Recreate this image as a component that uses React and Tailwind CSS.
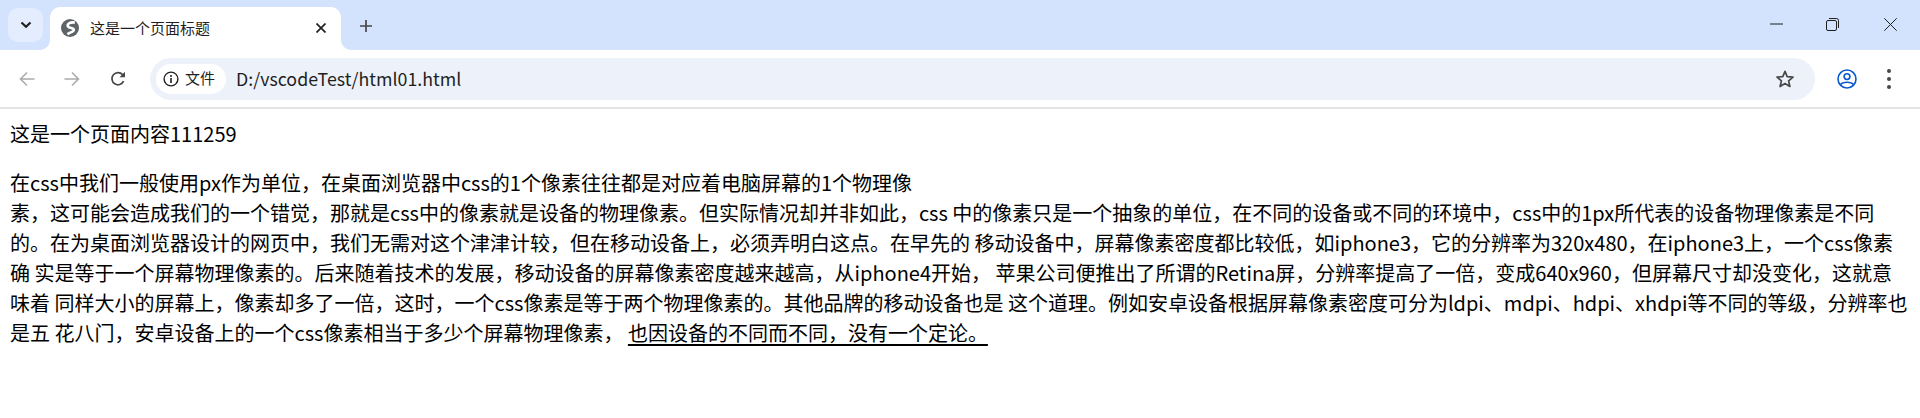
function ChevronIcon() {
  return (
    <svg width="16" height="16" viewBox="0 0 16 16" fill="none" stroke="#1f1f1f" strokeWidth="2.2">
      <path d="M3.5 5.5 L8 9.7 L12.5 5.5" />
    </svg>
  );
}

function GlobeIcon() {
  return (
    <svg width="18" height="18" viewBox="0 0 18 18" fill="none">
      <circle cx="9" cy="9" r="9" fill="#5f6368" />
      <path d="M13.8 3.6 C9.5 2.8 6 4.6 6.8 7.2 C7.6 9.8 12.6 8.4 12.8 10.8 C13 12.8 9 13.2 6.4 15.2" stroke="#fff" strokeWidth="2.6" />
    </svg>
  );
}

function ArrowIcon({ flip, color }) {
  return (
    <svg width="16" height="16" viewBox="0 0 16 16" fill="none" stroke={color} strokeWidth="1.6" className={flip ? "-scale-x-100" : ""}>
      <path d="M15.5 8 H1.5 M8 1.5 L1.5 8 L8 14.5" />
    </svg>
  );
}

function ReloadIcon() {
  return (
    <svg width="16" height="16" viewBox="0 0 16 16" fill="none" stroke="#474747" strokeWidth="1.7">
      <path d="M13.6 10.2 A6.1 6.1 0 1 1 12.6 3.6 L14.5 5.5" />
      <path d="M15 0.8 V6.3 H9.5 Z" fill="#474747" stroke="none" />
    </svg>
  );
}

function InfoIcon() {
  return (
    <svg width="16" height="16" viewBox="0 0 16 16" fill="none">
      <circle cx="8" cy="8" r="6.9" stroke="#1f1f1f" strokeWidth="1.4" />
      <path d="M8 7 V12" stroke="#1f1f1f" strokeWidth="1.6" />
      <circle cx="8" cy="4.9" r="1" fill="#1f1f1f" />
    </svg>
  );
}

function StarIcon() {
  return (
    <svg width="20" height="20" viewBox="0 0 20 20" fill="none" stroke="#474747" strokeWidth="1.7" strokeLinejoin="round">
      <path d="M10 2.4 L12.2 7.6 L18 8.1 L13.6 11.9 L14.9 17.5 L10 14.6 L5.1 17.5 L6.4 11.9 L2 8.1 L7.8 7.6 Z" />
    </svg>
  );
}

function ProfileIcon() {
  return (
    <svg width="20" height="20" viewBox="0 0 20 20" fill="none" stroke="#0b57d0" strokeWidth="1.6">
      <circle cx="10" cy="10" r="9" />
      <circle cx="10" cy="7.6" r="2.9" />
      <path d="M3.6 15.6 C5.5 12.4 14.5 12.4 16.4 15.6" />
    </svg>
  );
}

function TabFoot({ right }) {
  return (
    <svg width="10" height="10" viewBox="0 0 10 10" className={right ? "absolute -right-[10px] bottom-0" : "absolute -left-[10px] bottom-0"}>
      <path d={right ? "M0 0 A10 10 0 0 0 10 10 H0 Z" : "M10 0 A10 10 0 0 1 0 10 H10 Z"} fill="#fff" />
    </svg>
  );
}

function App() {
  return (
    <div className="h-[418px] w-[1920px] overflow-hidden bg-white font-['Noto_Sans_CJK_SC','Noto_Sans',sans-serif]">
      <div className="flex h-[50px] bg-[#d3e3fd]">
        <div className="ml-2 mt-2 flex h-[34px] w-[35px] items-center justify-center rounded-[10px] bg-[#e4edfd]">
          <ChevronIcon />
        </div>
        <div className="relative ml-[7px] mt-[7px] flex h-[43px] w-[291px] items-center rounded-t-[10px] bg-white pb-[1px]">
          <TabFoot />
          <TabFoot right />
          <div className="ml-[11px]">
            <GlobeIcon />
          </div>
          <span className="ml-[11px] text-[15px] text-[#1f1f1f]">这是一个页面标题</span>
          <svg width="10" height="10" viewBox="0 0 10 10" stroke="#1f1f1f" strokeWidth="1.7" className="ml-auto mr-[15px]">
            <path d="M0.5 0.5 L9.5 9.5 M9.5 0.5 L0.5 9.5" />
          </svg>
        </div>
        <svg width="14" height="14" viewBox="0 0 14 14" stroke="#474747" strokeWidth="1.7" className="ml-[18px] mt-[19px]">
          <path d="M7 1 V13 M1 7 H13" />
        </svg>
        <div className="ml-auto flex h-[48px] items-center">
          <svg width="13" height="2" viewBox="0 0 13 2" stroke="#1f1f1f" strokeWidth="1" className="mr-[43px]">
            <path d="M0 1 H13" />
          </svg>
          <svg width="13" height="13" viewBox="0 0 13 13" fill="none" stroke="#1f1f1f" strokeWidth="1" className="mr-[45px]">
            <rect x="0.5" y="2.5" width="10" height="10" rx="1.5" />
            <path d="M3 0.5 H10.5 A2 2 0 0 1 12.5 2.5 V10" />
          </svg>
          <svg width="13" height="13" viewBox="0 0 13 13" stroke="#1f1f1f" strokeWidth="1" className="mr-[23px]">
            <path d="M0.3 0.3 L12.7 12.7 M12.7 0.3 L0.3 12.7" />
          </svg>
        </div>
      </div>

      <div className="flex h-[59px] items-center rounded-t-[10px] border-b-2 border-[#e3e3e3] bg-white">
        <div className="ml-[19px]">
          <ArrowIcon color="#a9abad" />
        </div>
        <div className="ml-[29px]">
          <ArrowIcon flip color="#a9abad" />
        </div>
        <div className="ml-[30px]">
          <ReloadIcon />
        </div>
        <div className="ml-[24px] flex h-[42px] w-[1665px] items-center rounded-full bg-[#edf2fa] pl-[6px]">
          <div className="flex h-[30px] w-[70px] items-center rounded-full bg-white pl-[7px]">
            <InfoIcon />
            <span className="ml-[6px] text-[15px] text-[#1f1f1f]">文件</span>
          </div>
          <span className="ml-[10px] text-[17.8px] text-[#1f1f1f]">D:/vscodeTest/html01.html</span>
          <div className="ml-auto mr-[20px]">
            <StarIcon />
          </div>
        </div>
        <div className="ml-[22px]">
          <ProfileIcon />
        </div>
        <div className="ml-[30px] flex flex-col gap-[4px]">
          <span className="h-[4px] w-[4px] rounded-full bg-[#474747]"></span>
          <span className="h-[4px] w-[4px] rounded-full bg-[#474747]"></span>
          <span className="h-[4px] w-[4px] rounded-full bg-[#474747]"></span>
        </div>
      </div>

      <div className="p-[10px] text-[20px] text-black">
        <div className="mb-[19px]">这是一个页面内容111259</div>
        <p>
          在css中我们一般使用px作为单位，在桌面浏览器中css的1个像素往往都是对应着电脑屏幕的1个物理像<br />
          素，这可能会造成我们的一个错觉，那就是css中的像素就是设备的物理像素。但实际情况却并非如此，css 中的像素只是一个抽象的单位，在不同的设备或不同的环境中，css中的1px所代表的设备物理像素是不同的。在为桌面浏览器设计的网页中，我们无需对这个津津计较，但在移动设备上，必须弄明白这点。在早先的 移动设备中，屏幕像素密度都比较低，如iphone3，它的分辨率为320x480，在iphone3上，一个css像素确 实是等于一个屏幕物理像素的。后来随着技术的发展，移动设备的屏幕像素密度越来越高，从iphone4开始， 苹果公司便推出了所谓的Retina屏，分辨率提高了一倍，变成640x960，但屏幕尺寸却没变化，这就意味着 同样大小的屏幕上，像素却多了一倍，这时，一个css像素是等于两个物理像素的。其他品牌的移动设备也是 这个道理。例如安卓设备根据屏幕像素密度可分为ldpi、mdpi、hdpi、xhdpi等不同的等级，分辨率也是五 花八门，安卓设备上的一个css像素相当于多少个屏幕物理像素，{" "}
          <span className="underline decoration-2 underline-offset-[3px]">也因设备的不同而不同，没有一个定论。</span>
        </p>
      </div>
    </div>
  );
}

export default App;
